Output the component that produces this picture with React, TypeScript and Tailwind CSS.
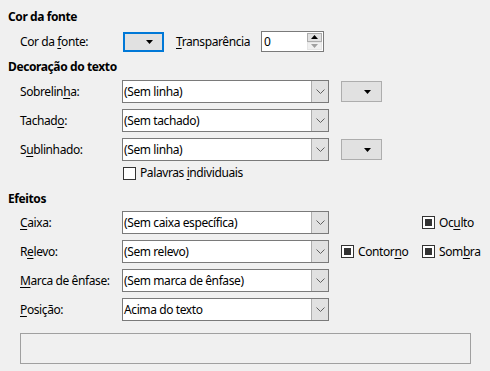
import React from 'react'

const font = { fontFamily: '"Noto Sans", "Segoe UI", sans-serif' }

function U({ children }: { children: React.ReactNode }) {
  return <span className="underline decoration-1 underline-offset-[2px]">{children}</span>
}

function Chevron() {
  return (
    <svg width="9" height="5" viewBox="0 0 9 5" className="block">
      <path d="M0.5 0.5 L4.5 4.5 L8.5 0.5" fill="none" stroke="#606060" strokeWidth="1" />
    </svg>
  )
}

function Tri({ color = '#000' }: { color?: string }) {
  return (
    <svg width="7" height="4" viewBox="0 0 7 4" className="block">
      <path d="M0 0 L7 0 L3.5 4 Z" fill={color} />
    </svg>
  )
}

function Select({ value }: { value: string }) {
  return (
    <div className="flex h-[23px] w-[207px] border border-[#7a7a7a] bg-white">
      <div className="flex-1 pl-[1px] leading-[21px]">{value}</div>
      <div className="flex w-[17px] items-center justify-center border-l border-[#adadad] bg-[#e1e1e1]">
        <Chevron />
      </div>
    </div>
  )
}

function ColorBtn() {
  return (
    <div className="flex h-[21px] w-[41px] items-center justify-end border border-[#adadad] bg-[#e1e1e1] pr-[10px]">
      <Tri />
    </div>
  )
}

function Check({ checked, children }: { checked?: boolean; children: React.ReactNode }) {
  return (
    <div className="flex items-center gap-[4px]">
      <div className="flex h-[13px] w-[13px] items-center justify-center border border-[#333] bg-white">
        {checked && <div className="h-[7px] w-[7px] bg-[#333]" />}
      </div>
      <span className="leading-4">{children}</span>
    </div>
  )
}

function Row({ label, children }: { label: React.ReactNode; children: React.ReactNode }) {
  return (
    <div className="flex h-[23px] items-center pl-[20px]">
      <div className="w-[102px]">{label}</div>
      {children}
    </div>
  )
}

export default function App() {
  return (
    <div
      style={font}
      className="h-[371px] w-[490px] overflow-hidden bg-[#f0f0f0] pt-[9px] text-[12px] tracking-[-0.4px] text-black"
    >
      <div className="h-4 pl-[8px] font-bold leading-4">Cor da fonte</div>

      <div className="mt-[6px] flex h-[21px] items-center pl-[20px]">
        <div className="w-[103px]">
          Cor da <U>f</U>onte:
        </div>
        <div className="flex h-[20px] w-[41px] items-center justify-end border-2 border-[#0078d7] bg-[#e1e1e1] pr-[9px]">
          <Tri />
        </div>
        <div className="ml-[12px] w-[85px]">
          <U>T</U>ransparência
        </div>
        <div className="flex h-[21px] w-[63px] border border-[#7a7a7a] bg-white">
          <div className="flex-1 pl-[2px] leading-[19px]">0</div>
          <div className="mr-[1px] flex w-[15px] flex-col py-[1px]">
            <div className="flex flex-1 items-center justify-center border border-[#adadad] bg-[#e1e1e1]">
              <svg width="7" height="4" viewBox="0 0 7 4" className="block">
                <path d="M0 4 L7 4 L3.5 0 Z" fill="#000" />
              </svg>
            </div>
            <div className="flex flex-1 items-center justify-center border border-[#e5e5e5] bg-[#f0f0f0]">
              <Tri color="#a0a0a0" />
            </div>
          </div>
        </div>
      </div>

      <div className="mt-[7px] h-4 pl-[8px] font-bold leading-4">Decoração do texto</div>

      <div className="mt-[5px] flex flex-col gap-[6px]">
        <Row
          label={
            <>
              Sobrelin<U>h</U>a:
            </>
          }
        >
          <Select value="(Sem linha)" />
          <div className="ml-[12px]">
            <ColorBtn />
          </div>
        </Row>
        <Row
          label={
            <>
              Tachad<U>o</U>:
            </>
          }
        >
          <Select value="(Sem tachado)" />
        </Row>
        <Row
          label={
            <>
              S<U>u</U>blinhado:
            </>
          }
        >
          <Select value="(Sem linha)" />
          <div className="ml-[12px]">
            <ColorBtn />
          </div>
        </Row>
      </div>

      <div className="mt-[5px] flex h-[14px] items-center pl-[123px]">
        <Check>
          Palavras <U>i</U>ndividuais
        </Check>
      </div>

      <div className="mt-[11px] h-4 pl-[8px] font-bold leading-4">Efeitos</div>

      <div className="mt-[4px] flex flex-col gap-[6px]">
        <Row
          label={
            <>
              <U>C</U>aixa:
            </>
          }
        >
          <Select value="(Sem caixa específica)" />
          <div className="ml-[93px]">
            <Check checked>
              Oc<U>u</U>lto
            </Check>
          </div>
        </Row>
        <Row
          label={
            <>
              R<U>e</U>levo:
            </>
          }
        >
          <Select value="(Sem relevo)" />
          <div className="ml-[12px] w-[81px]">
            <Check checked>
              Contor<U>n</U>o
            </Check>
          </div>
          <Check checked>
            Som<U>b</U>ra
          </Check>
        </Row>
        <Row
          label={
            <>
              <U>M</U>arca de ênfase:
            </>
          }
        >
          <Select value="(Sem marca de ênfase)" />
        </Row>
        <Row
          label={
            <>
              <U>P</U>osição:
            </>
          }
        >
          <Select value="Acima do texto" />
        </Row>
      </div>

      <div className="ml-[20px] mt-[12px] h-[31px] w-[451px] border border-[#a0a0a0]" />
    </div>
  )
}
